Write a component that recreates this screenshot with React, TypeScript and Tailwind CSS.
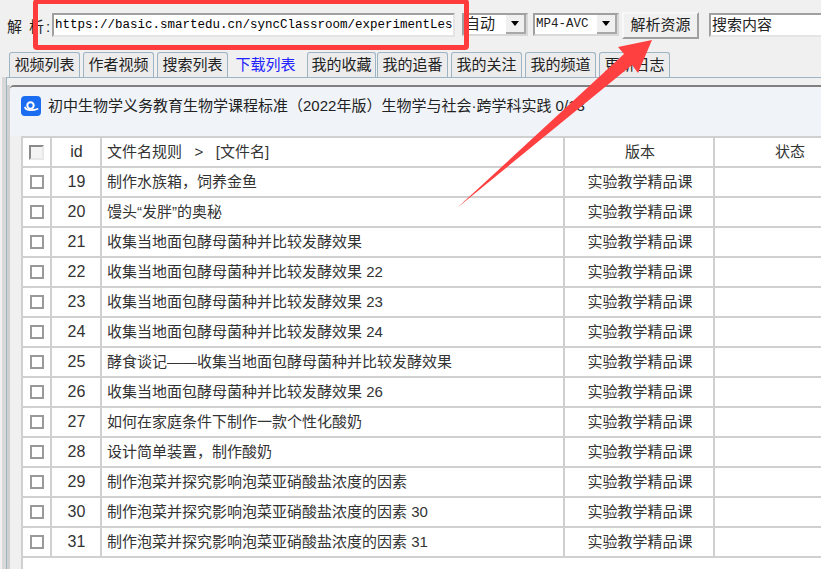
import React from "react";

const rows = [
  { id: 19, name: "制作水族箱\uFF0C饲养金鱼" },
  { id: 20, name: "馒头“发胖”的奥秘" },
  { id: 21, name: "收集当地面包酵母菌种并比较发酵效果" },
  { id: 22, name: "收集当地面包酵母菌种并比较发酵效果 22" },
  { id: 23, name: "收集当地面包酵母菌种并比较发酵效果 23" },
  { id: 24, name: "收集当地面包酵母菌种并比较发酵效果 24" },
  { id: 25, name: "酵食谈记——收集当地面包酵母菌种并比较发酵效果" },
  { id: 26, name: "收集当地面包酵母菌种并比较发酵效果 26" },
  { id: 27, name: "如何在家庭条件下制作一款个性化酸奶" },
  { id: 28, name: "设计简单装置\uFF0C制作酸奶" },
  { id: 29, name: "制作泡菜并探究影响泡菜亚硝酸盐浓度的因素" },
  { id: 30, name: "制作泡菜并探究影响泡菜亚硝酸盐浓度的因素 30" },
  { id: 31, name: "制作泡菜并探究影响泡菜亚硝酸盐浓度的因素 31" },
];

const tabs = ["视频列表", "作者视频", "搜索列表", "下载列表", "我的收藏", "我的追番", "我的关注", "我的频道", "更新日志"];

const font = "font-['Liberation_Sans','Noto_Sans_CJK_SC',sans-serif]";

const tabClass = (t: string) => {
  if (t === "下载列表") return "-ml-[3px] flex h-[25px] w-[79px] items-center justify-center pt-[1px] pr-[4px] text-[#2222ff]";
  const width = t === "我的收藏" ? "mr-[1px] w-[69px]" : "mr-[3px] w-[71px]";
  return `${width} flex h-[25px] items-center justify-center rounded-t-[3px] border border-b-0 border-[#9db4c4] bg-[#ececec] pt-[1px] text-[#222]`;
};

const Select = ({ label, width, mono }: { label: string; width: string; mono?: boolean }) => (
  <div className={`flex h-[23px] items-center border-2 border-t-[#a0a0a0] border-l-[#a0a0a0] border-r-[#d8d8d8] border-b-[#d8d8d8] bg-white ${width}`}>
    <span className={`flex-1 overflow-hidden pl-[1px] whitespace-nowrap ${mono ? "font-['Liberation_Mono',monospace] text-[12.5px]" : "text-[15px]"} text-[#222]`}>{label}</span>
    <div className="flex h-full w-[20px] items-center justify-center border-r-2 border-b-2 border-r-[#a8a8a8] border-b-[#a8a8a8] bg-[#f0f0f0]">
      <div className="h-0 w-0 border-x-[4px] border-t-[5px] border-x-transparent border-t-black" />
    </div>
  </div>
);

const Checkbox = () => <div className="h-[14px] w-[14px] border-2 border-[#9a9a9a] bg-white" />;

const Row = ({ box, id, name, version, status, nameClass }: { box: React.ReactNode; id: React.ReactNode; name: React.ReactNode; version: string; status?: string; nameClass?: string }) => (
  <div className="flex h-[30px] border-b-2 border-[#d0d0d0] text-[15px] text-[#333]">
    <div className="flex w-[29px] shrink-0 items-center justify-center border-r-2 border-[#d0d0d0]">{box}</div>
    <div className="flex w-[50px] shrink-0 items-center justify-center border-r-2 border-[#d0d0d0] pl-[1px] text-[16px]">{id}</div>
    <div className={`flex w-[463px] shrink-0 items-center border-r-2 border-[#d0d0d0] pl-[5px] whitespace-nowrap ${nameClass ?? ""}`}>{name}</div>
    <div className="flex w-[150px] shrink-0 items-center justify-center border-r-2 border-[#d0d0d0] pl-[2px]">{version}</div>
    <div className="flex w-[150px] shrink-0 items-center justify-center">{status}</div>
  </div>
);

export default function App() {
  return (
    <div className={`relative h-[569px] w-[821px] overflow-hidden bg-[#f0f0f0] ${font}`}>
      {/* toolbar */}
      <div className="flex h-[52px] items-start pt-[13px] pl-[7px]">
        <span className="flex w-[45px] text-[15px] leading-[27px] text-[#222]">
          <span>解</span>
          <span className="ml-[7px]">析</span>
          <span className="ml-[2px]">:</span>
        </span>
        <div className="flex h-[24px] w-[403px] items-center overflow-hidden border-2 border-t-[#a0a0a0] border-l-[#a0a0a0] border-r-[#e4e4e4] border-b-[#e4e4e4] bg-white pl-[1px] font-['Liberation_Mono',monospace] text-[12.5px] whitespace-nowrap text-black">
          https://basic.smartedu.cn/syncClassroom/experimentLes
        </div>
        <div className="ml-[7px] flex gap-[5px]">
          <Select label="自动" width="w-[66px]" />
          <Select label="MP4-AVC" width="w-[86px]" mono />
        </div>
        <button className="-mt-[1px] ml-[3px] h-[27px] w-[77px] border-2 border-t-[#f8f8f8] border-l-[#f8f8f8] border-r-[#a0a0a0] border-b-[#a0a0a0] bg-[#f0f0f0] text-[15px] text-[#222]">解析资源</button>
        <div className="ml-[10px] flex h-[24px] flex-1 items-center overflow-hidden border-2 border-r-0 border-t-[#a0a0a0] border-l-[#a0a0a0] border-b-[#e4e4e4] bg-white pl-[1px] text-[15px] whitespace-nowrap text-[#222]">搜索内容</div>
      </div>

      {/* tabs */}
      <div className="flex h-[25px] pl-[9px] text-[15px]">
        {tabs.map((t) => (
          <div key={t} className={tabClass(t)}>
            {t}
          </div>
        ))}
      </div>

      {/* panel */}
      <div className="ml-[2px] h-[492px] border-l-[4px] border-[#d8d8d8]">
        <div className="h-full border-l border-t border-[#9db4c4] pt-[7px]">
          <div className="h-full border-l-[3px] border-[#d0d0d0]">
            <div className="h-full rounded-tl-[4px] border-t-2 border-t-[#808080] bg-[#f0f0f0]">
              <div className="flex h-[49px] items-start gap-[7px] rounded-tl-[4px] bg-[#f0f4f9] pt-[9px] pl-[11px] text-[15px] leading-[20px] whitespace-nowrap text-[#222]">
                <svg width="20" height="20" viewBox="0 0 20 20" className="shrink-0">
                  <rect width="20" height="20" rx="4" fill="#1a6cf0" />
                  <circle cx="9.500" cy="9.500" r="3.200" fill="none" stroke="#fff" strokeWidth="2" />
                  <path d="M4 11.500C5 14.500 11 15 16.500 13" fill="none" stroke="#fff" strokeWidth="1.800" strokeLinecap="round" />
                </svg>
                <span>初中生物学义务教育生物学课程标准{"\uFF08"}2022年版{"\uFF09"}生物学与社会·跨学科实践 0/13</span>
              </div>
              <div className="ml-[11px] h-[440px] border-l-2 border-t-2 border-[#d0d0d0] bg-white">
                <Row box={<div className="h-[15px] w-[15px] border-2 border-t-[#8a8a8a] border-l-[#8a8a8a] border-r-[#e8e8e8] border-b-[#e8e8e8] bg-[#f4f4f4]" />} id="id" name="文件名规则   >   [文件名]" nameClass="whitespace-pre" version="版本" status="状态" />
                {rows.map((r) => (
                  <Row key={r.id} box={<Checkbox />} id={r.id} name={r.name} version="实验教学精品课" />
                ))}
              </div>
            </div>
          </div>
        </div>
      </div>

      {/* annotation: red box and arrow */}
      <div className="absolute top-[-1px] left-[33px] h-[51px] w-[436px] rounded-[4px] border-[5px] border-[#ff3b3b]" />
      <svg className="absolute top-0 left-0" width="821" height="569" viewBox="0 0 821 569">
        <polygon points="652,40 638,73 632,65 457,208 624,54 618,47" fill="#ff4040" />
      </svg>
    </div>
  );
}
